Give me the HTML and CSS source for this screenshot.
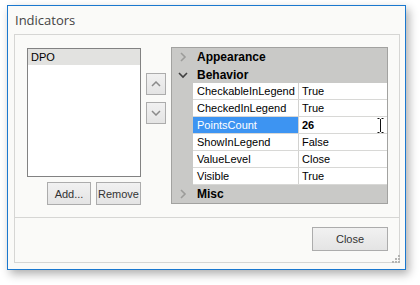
FILE: index.html
```html
<html>
 <head>
  <link rel="stylesheet" href="styles.css">
 </head>
<body>
 <div class="window">
  <div class="title">Indicators</div>

  <div class="panel">
   <div class="body">

    <div class="listCol">
     <div class="listbox">
      <div class="item selItem">DPO</div>
     </div>
     <div class="listBtns">
      <div class="btn addBtn">Add...</div>
      <div class="btn removeBtn">Remove</div>
     </div>
    </div>

    <div class="moveCol">
     <div class="btn moveBtn">
      <svg width="10" height="6" viewBox="0 0 10 6"><polyline points="1,5 5,1 9,5" fill="none" stroke="#8a8a8a" stroke-width="1.5"/></svg>
     </div>
     <div class="btn moveBtn">
      <svg width="10" height="6" viewBox="0 0 10 6"><polyline points="1,1 5,5 9,1" fill="none" stroke="#8a8a8a" stroke-width="1.5"/></svg>
     </div>
    </div>

    <div class="grid">
     <div class="cat catFirst">
      <div class="gutter"><svg width="8" height="10" viewBox="0 0 8 10"><polyline points="2,1 6,5 2,9" fill="none" stroke="#9c9c9a" stroke-width="1.6"/></svg></div>
      <span>Appearance</span>
     </div>
     <div class="cat">
      <div class="gutter"><svg width="10" height="8" viewBox="0 0 10 8"><polyline points="1,2 5,6 9,2" fill="none" stroke="#404040" stroke-width="1.6"/></svg></div>
      <span>Behavior</span>
     </div>

     <div class="prop"><div class="pname">CheckableInLegend</div><div class="pval">True</div></div>
     <div class="prop"><div class="pname">CheckedInLegend</div><div class="pval">True</div></div>
     <div class="prop"><div class="pname selName">PointsCount</div><div class="pval editVal">26
       <svg class="ibeam" width="7" height="15" viewBox="0 0 7 15"><path d="M0.5 0.5 H2.5 M4.5 0.5 H6.5 M3.5 1 V14 M0.5 14.5 H2.5 M4.5 14.5 H6.5" fill="none" stroke="#111" stroke-width="1"/></svg>
      </div></div>
     <div class="prop"><div class="pname">ShowInLegend</div><div class="pval">False</div></div>
     <div class="prop"><div class="pname">ValueLevel</div><div class="pval">Close</div></div>
     <div class="prop"><div class="pname">Visible</div><div class="pval">True</div></div>

     <div class="cat catLast">
      <div class="gutter"><svg width="8" height="10" viewBox="0 0 8 10"><polyline points="2,1 6,5 2,9" fill="none" stroke="#9c9c9a" stroke-width="1.6"/></svg></div>
      <span>Misc</span>
     </div>
    </div>

   </div>

   <div class="footer">
    <div class="btn closeBtn">Close</div>
   </div>
  </div>

  <div class="grip">
   <svg width="8" height="8" viewBox="0 0 8 8" fill="#b4b4b2">
    <rect x="6" y="0" width="2" height="2"/>
    <rect x="3" y="3" width="2" height="2"/><rect x="6" y="3" width="2" height="2"/>
    <rect x="0" y="6" width="2" height="2"/><rect x="3" y="6" width="2" height="2"/><rect x="6" y="6" width="2" height="2"/>
   </svg>
  </div>
 </div>
</body>
</html>
```

FILE: styles.css
```css
body {
      margin: 0;
      background: #ffffff;
      font-family: "Liberation Sans", Arial, sans-serif;
      font-size: 11px;
      color: #000000;
     }

.window {
         position: relative;
         box-sizing: border-box;
         width: 399px;
         height: 265px;
         margin: 5px 0 0 7px;
         border: 1px solid #1a78cf;
         background: #fafaf8;
         box-shadow: 3px 4px 9px rgba(0, 0, 0, 0.32);
        }

.title {
        height: 28px;
        line-height: 29px;
        padding-left: 7px;
        font-family: "Open Sans", sans-serif;
        font-size: 13px;
        color: #444444;
       }

.panel {
        margin: 0 5px 0 6px;
        height: 229px;
        box-sizing: border-box;
        border: 1px solid #d6d6d4;
       }

.body {
       display: flex;
       align-items: flex-start;
       height: 183px;
       padding: 12px 11px 0 12px;
       box-sizing: border-box;
       border-bottom: 1px solid #d6d6d4;
      }

.listCol {
          width: 114px;
          margin-top: 1px;
         }

.listbox {
          box-sizing: border-box;
          height: 129px;
          border: 1px solid #828282;
          background: #ffffff;
         }

.item {
       height: 16px;
       line-height: 16px;
       padding-left: 3px;
      }

.selItem { background: #e2e2e0; }

.listBtns {
           display: flex;
           justify-content: flex-end;
           gap: 5px;
           margin-top: 5px;
          }

.btn {
      box-sizing: border-box;
      display: flex;
      align-items: center;
      justify-content: center;
      border: 1px solid #acacac;
      background: linear-gradient(#f1f1f1, #e4e4e4);
      color: #333333;
     }

.addBtn { width: 44px; height: 23px; }
.removeBtn { width: 45px; height: 23px; }

.moveCol {
          display: flex;
          flex-direction: column;
          gap: 7px;
          margin: 26px 0 0 5px;
         }

.moveBtn { width: 20px; height: 22px; }

.grid {
       width: 217px;
       margin-left: 5px;
       box-sizing: border-box;
       border: 1px solid #a2a2a0;
       background: #c9c9c7;
      }

.cat {
      display: flex;
      align-items: center;
      height: 17px;
      font-weight: bold;
      font-size: 12px;
     }

.catFirst { height: 18px; }
.catLast { height: 18px; }

.gutter {
         width: 21px;
         display: flex;
         justify-content: center;
         align-items: center;
        }

.cat span { padding-left: 4px; }

.prop {
       display: flex;
       height: 17px;
       margin-left: 21px;
       box-sizing: border-box;
       border-bottom: 1px solid #d8d8d6;
       background: #ffffff;
      }

.pname {
        width: 106px;
        padding-left: 4px;
        box-sizing: border-box;
        line-height: 16px;
        border-right: 1px solid #d2d2d0;
       }

.selName {
          background: #3d94f2;
          color: #ffffff;
         }

.pval {
       flex: 1;
       padding-left: 3px;
       line-height: 16px;
      }

.editVal {
          position: relative;
          font-weight: bold;
         }

.ibeam {
        position: absolute;
        left: 78px;
        top: 1px;
       }

.footer {
         display: flex;
         justify-content: flex-end;
         padding: 9px 11px 0 0;
        }

.closeBtn { width: 76px; height: 24px; }

.grip {
       position: absolute;
       right: 5px;
       bottom: 6px;
       width: 8px;
       height: 8px;
      }

.grip svg { display: block; }
```
